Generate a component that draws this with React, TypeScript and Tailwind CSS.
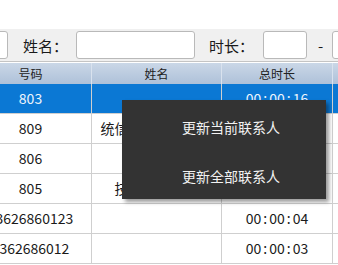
import React from 'react';

const cols = ['w-[122px]', 'w-[130px]', 'w-[111px]', 'w-[60px]'];

const rows = [
  { num: '803', name: '', time: '00:00:16', selected: true },
  { num: '809', name: '统信软件测试号码', time: '00:00:09' },
  { num: '806', name: '', time: '00:00:07' },
  { num: '805', name: '技术支持中心', time: '00:00:05' },
  { num: '13626860123', name: '', time: '00:00:04' },
  { num: '1362686012', name: '', time: '00:00:03' },
];

function Time({ value }: { value: string }) {
  const parts = value.split(':');
  return (
    <span className="flex items-center">
      {parts.map((p, i) => (
        <React.Fragment key={i}>
          {i > 0 && <span className="px-[2px]">:</span>}
          <span>{p}</span>
        </React.Fragment>
      ))}
    </span>
  );
}

export default function App() {
  return (
    <div className="relative h-[265px] w-[338px] overflow-hidden bg-white font-['Noto_Sans_CJK_SC','Microsoft_YaHei',sans-serif] text-[#1a1a1a]">
      <div className="h-[29px]" />
      <div className="-ml-[30px] w-[430px]">
        {/* 검색 바 */}
        <div className="flex h-[33px] items-center border-b border-[#c4c4c4] bg-[#f0f0f0]">
          <div className="h-[28px] w-[38px] rounded-[3px] border border-[#b9b9b9] bg-white" />
          <span className="ml-[15px] text-[15px] leading-none">姓名：</span>
          <div className="ml-[8px] h-[28px] w-[119px] rounded-[3px] border border-[#b9b9b9] bg-white" />
          <span className="ml-[14px] text-[15px] leading-none">时长：</span>
          <div className="ml-[9px] h-[28px] w-[44px] rounded-[3px] border border-[#b9b9b9] bg-white" />
          <span className="ml-[11px] text-[15px] leading-none">-</span>
          <div className="ml-[9px] h-[28px] w-[44px] rounded-[3px] border border-[#b9b9b9] bg-white" />
        </div>
        <div className="h-px bg-white" />
        {/* 헤더 */}
        <div className="flex h-[21px] bg-gradient-to-b from-[#cad7e7] to-[#aec1d9] text-[12px] text-[#222]">
          {['号码', '姓名', '总时长', ''].map((h, i) => (
            <div
              key={i}
              className={`${cols[i]} flex items-center justify-center border-r border-[#d9e2ee]`}
            >
              {h}
            </div>
          ))}
        </div>
        {rows.map((r) => (
          <div
            key={r.num}
            className={`flex h-[30px] border-b border-[#cfcfcf] text-[14px] ${
              r.selected ? 'bg-[#0b78d4] text-[#eef5fc]' : 'bg-white'
            }`}
          >
            <div className={`${cols[0]} flex items-center justify-center whitespace-nowrap border-r border-[#cfcfcf]`}>
              {r.num}
            </div>
            <div className={`${cols[1]} flex items-center justify-center whitespace-nowrap border-r border-[#cfcfcf]`}>
              {r.name}
            </div>
            <div className={`${cols[2]} flex items-center justify-center whitespace-nowrap border-r border-[#cfcfcf]`}>
              <Time value={r.time} />
            </div>
            <div className={cols[3]} />
          </div>
        ))}
      </div>

      {/* 우클릭 메뉴 */}
      <div className="absolute left-[122px] top-[100px] flex h-[99px] w-[204px] flex-col bg-[#333333] text-[14px] text-[#f2f2f2] shadow-[3px_3px_4px_rgba(0,0,0,0.4)]">
        <div className="flex h-[50px] items-center pl-[60px] pt-[4px]">更新当前联系人</div>
        <div className="flex h-[49px] items-center pl-[60px] pt-[4px]">更新全部联系人</div>
      </div>
    </div>
  );
}
